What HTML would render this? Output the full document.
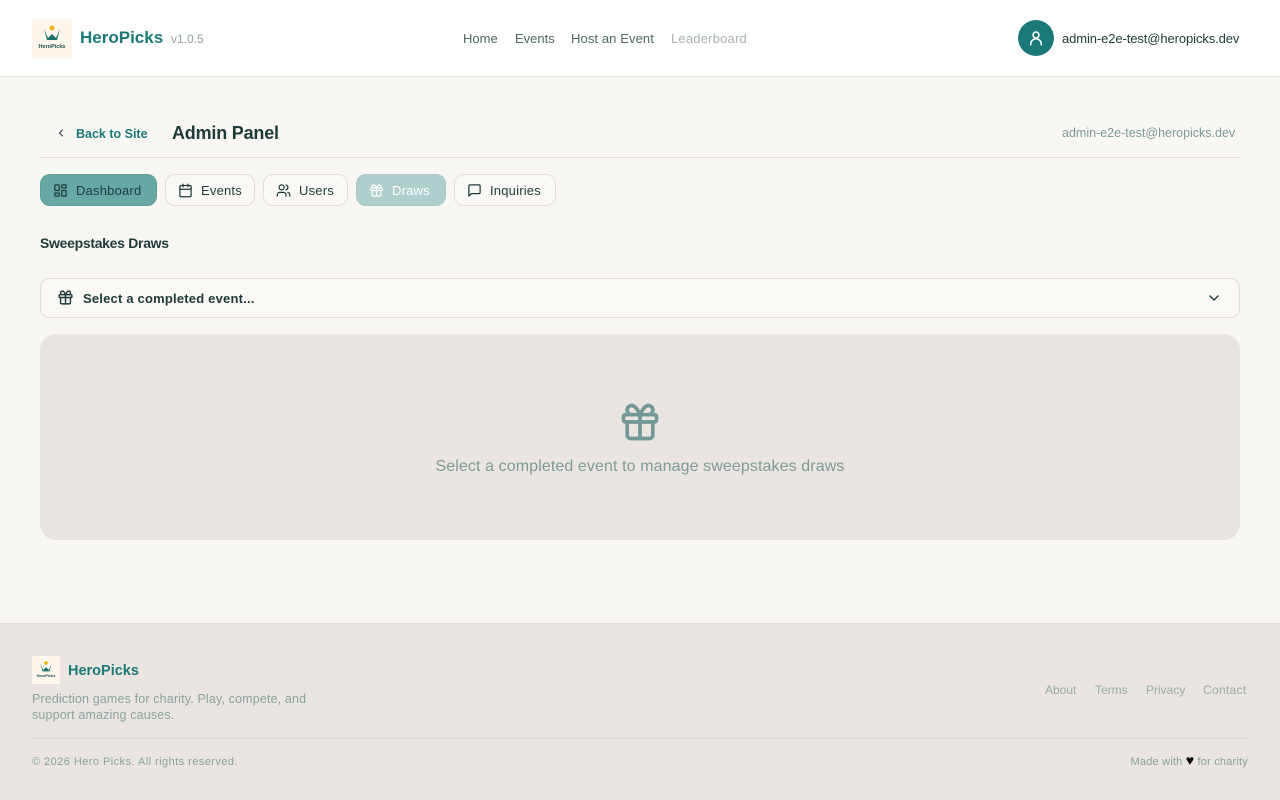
<!DOCTYPE html>
<html><head><meta charset="utf-8"><style>
*{box-sizing:border-box;margin:0;padding:0}
body{width:1280px;height:800px;overflow:hidden;background:#f8f7f4;font-family:"Liberation Sans",Arial,sans-serif;color:#1e3a38;position:relative}
.hdr{position:absolute;top:0;left:0;width:1280px;height:77px;background:#fff;border-bottom:1px solid #e6e2dc}
.logo{position:absolute;left:32px;top:18px;width:40px;height:40px;background:#fdf6ec}
.a{position:absolute;white-space:nowrap}
svg.i{fill:none;stroke:currentColor;stroke-width:2;stroke-linecap:round;stroke-linejoin:round}
.tab{position:absolute;top:174px;height:32px;border:1px solid #e3ded7;border-radius:10px;background:#faf9f6;font-size:13px;color:#1e3a38;display:flex;align-items:center;padding-left:12px;gap:8px;letter-spacing:0.2px}
</style></head><body>
<div class="hdr">
 <div class="logo"><svg width="40" height="40" viewBox="0 0 40 40"><circle cx="20" cy="10" r="2.5" fill="#f0b400"/><path d="M12 11 L16 20 L20 16 L24 20 L28 11 L25 22 L15 22Z" fill="#1b6f6c"/><text x="20" y="30" font-size="5.5" font-weight="bold" fill="#1b4f4c" text-anchor="middle" font-family="Liberation Sans">HeroPicks</text></svg></div>
 <div class="a" style="left:80px;top:28px;font-size:17px;font-weight:bold;color:#1b7a78">HeroPicks</div>
 <div class="a" style="left:171px;top:32px;font-size:12px;color:#8fa3a0">v1.0.5</div>
 <div class="a" style="left:463px;top:31px;font-size:13px;color:#4f6664">Home</div>
 <div class="a" style="left:515px;top:31px;font-size:13px;color:#4f6664">Events</div>
 <div class="a" style="left:571px;top:31px;font-size:13px;color:#4f6664;letter-spacing:0.1px">Host an Event</div>
 <div class="a" style="left:671px;top:31px;font-size:13px;color:#a8b4b2;letter-spacing:0.2px">Leaderboard</div>
 <div class="a" style="left:1018px;top:20px;width:36px;height:36px;border-radius:50%;background:#1b7a78;display:flex;align-items:center;justify-content:center;color:#fff"><svg class="i" width="18" height="18" viewBox="0 0 24 24"><circle cx="12" cy="8" r="4"/><path d="M5 21v-1a7 7 0 0 1 14 0v1"/></svg></div>
 <div class="a" style="left:1062px;top:31px;font-size:13px;color:#1e3a38;letter-spacing:-0.1px">admin-e2e-test@heropicks.dev</div>
</div>
<svg class="i a" style="left:55px;top:127px;color:#1e3a38" width="12" height="12" viewBox="0 0 24 24"><path d="M15 18l-6-6 6-6"/></svg>
<div class="a" style="left:76px;top:127px;font-size:12.5px;font-weight:bold;color:#1b7a78">Back to Site</div>
<div class="a" style="left:172px;top:123px;font-size:18px;font-weight:bold;color:#1e3a38;letter-spacing:-0.2px">Admin Panel</div>
<div class="a" style="left:1062px;top:126px;font-size:12.5px;color:#7f9a97">admin-e2e-test@heropicks.dev</div>
<div class="a" style="left:40px;top:157px;width:1200px;height:1px;background:#e2ddd6"></div>
<div class="tab" style="left:40px;width:117px;background:#67a8a5;border-color:#5e9f9c"><svg class="i" width="15" height="15" viewBox="0 0 24 24"><rect x="3" y="3" width="7" height="9" rx="1"/><rect x="14" y="3" width="7" height="5" rx="1"/><rect x="14" y="12" width="7" height="9" rx="1"/><rect x="3" y="16" width="7" height="5" rx="1"/></svg>Dashboard</div>
<div class="tab" style="left:165px;width:90px"><svg class="i" width="15" height="15" viewBox="0 0 24 24"><rect x="3" y="4" width="18" height="18" rx="2"/><path d="M16 2v4M8 2v4M3 10h18"/></svg>Events</div>
<div class="tab" style="left:263px;width:85px"><svg class="i" width="15" height="15" viewBox="0 0 24 24"><path d="M16 21v-2a4 4 0 0 0-4-4H6a4 4 0 0 0-4 4v2"/><circle cx="9" cy="7" r="4"/><path d="M22 21v-2a4 4 0 0 0-3-3.87M16 3.13a4 4 0 0 1 0 7.75"/></svg>Users</div>
<div class="tab" style="left:356px;width:90px;background:#afcfcc;border-color:#a8c9c6;color:#fff"><svg class="i" width="15" height="15" viewBox="0 0 24 24"><rect x="3" y="8" width="18" height="4" rx="1"/><path d="M12 8v13M19 12v7a2 2 0 0 1-2 2H7a2 2 0 0 1-2-2v-7M7.5 8a2.5 2.5 0 0 1 0-5C10 3 12 8 12 8s2-5 4.5-5a2.5 2.5 0 0 1 0 5"/></svg>Draws</div>
<div class="tab" style="left:454px;width:102px"><svg class="i" width="15" height="15" viewBox="0 0 24 24"><path d="M21 15a2 2 0 0 1-2 2H7l-4 4V5a2 2 0 0 1 2-2h14a2 2 0 0 1 2 2z"/></svg>Inquiries</div>
<div class="a" style="left:40px;top:235px;font-size:14px;font-weight:bold;color:#1e3a38;letter-spacing:-0.3px">Sweepstakes Draws</div>
<div class="a" style="left:40px;top:278px;width:1200px;height:40px;border:1px solid #e2ddd6;border-radius:10px;background:#faf9f6"></div>
<svg class="i a" style="left:57px;top:289px;color:#1e3a38" width="17" height="17" viewBox="0 0 24 24"><rect x="3" y="8" width="18" height="4" rx="1"/><path d="M12 8v13M19 12v7a2 2 0 0 1-2 2H7a2 2 0 0 1-2-2v-7M7.5 8a2.5 2.5 0 0 1 0-5C10 3 12 8 12 8s2-5 4.5-5a2.5 2.5 0 0 1 0 5"/></svg>
<div class="a" style="left:83px;top:291px;font-size:13px;font-weight:bold;color:#1e3a38;letter-spacing:0.2px">Select a completed event...</div>
<svg class="i a" style="left:1206px;top:290px;color:#1e3a38" width="16" height="16" viewBox="0 0 24 24"><path d="M6 9l6 6 6-6"/></svg>
<div class="a" style="left:40px;top:334px;width:1200px;height:206px;border-radius:16px;background:#eae5e0"></div>
<svg class="i a" style="left:618px;top:400px;color:#739895" width="44" height="44" viewBox="0 0 24 24"><rect x="3" y="8" width="18" height="4" rx="1"/><path d="M12 8v13M19 12v7a2 2 0 0 1-2 2H7a2 2 0 0 1-2-2v-7M7.5 8a2.5 2.5 0 0 1 0-5C10 3 12 8 12 8s2-5 4.5-5a2.5 2.5 0 0 1 0 5"/></svg>
<div class="a" style="left:0;width:1280px;text-align:center;top:458px;font-size:16px;color:#7f9a97;letter-spacing:0.1px">Select a completed event to manage sweepstakes draws</div>
<div class="a" style="left:0;top:623px;width:1280px;height:177px;background:#eae5e0;border-top:1px solid #e0dad3"></div>
<div class="a" style="left:32px;top:656px;width:28px;height:28px;background:#fdf6ec"><svg width="28" height="28" viewBox="0 0 40 40"><circle cx="20" cy="10" r="2.5" fill="#f0b400"/><path d="M12 11 L16 20 L20 16 L24 20 L28 11 L25 22 L15 22Z" fill="#1b6f6c"/><text x="20" y="30" font-size="5.5" font-weight="bold" fill="#1b4f4c" text-anchor="middle" font-family="Liberation Sans">HeroPicks</text></svg></div>
<div class="a" style="left:68px;top:663px;font-size:14.5px;font-weight:bold;color:#1b7a78">HeroPicks</div>
<div class="a" style="left:32px;top:692px;font-size:12.5px;line-height:15.5px;color:#8aa19e;letter-spacing:0.15px">Prediction games for charity. Play, compete, and<br>support amazing causes.</div>
<div class="a" style="left:1045px;top:683px;font-size:12px;color:#9aaaa8">About</div>
<div class="a" style="left:1095px;top:683px;font-size:12px;color:#9aaaa8">Terms</div>
<div class="a" style="left:1146px;top:683px;font-size:12px;color:#9aaaa8">Privacy</div>
<div class="a" style="left:1203px;top:683px;font-size:12px;color:#9aaaa8;letter-spacing:0.3px">Contact</div>
<div class="a" style="left:32px;top:738px;width:1216px;height:1px;background:#e0dad3"></div>
<div class="a" style="left:32px;top:756px;font-size:11px;color:#8aa19e;letter-spacing:0.45px">© 2026 Hero Picks. All rights reserved.</div>
<div class="a" style="right:32px;top:755px;font-size:11px;color:#8aa19e;letter-spacing:0.2px">Made with <span style="color:#000;font-size:14px;line-height:11px">♥</span> for charity</div>
</body></html>
